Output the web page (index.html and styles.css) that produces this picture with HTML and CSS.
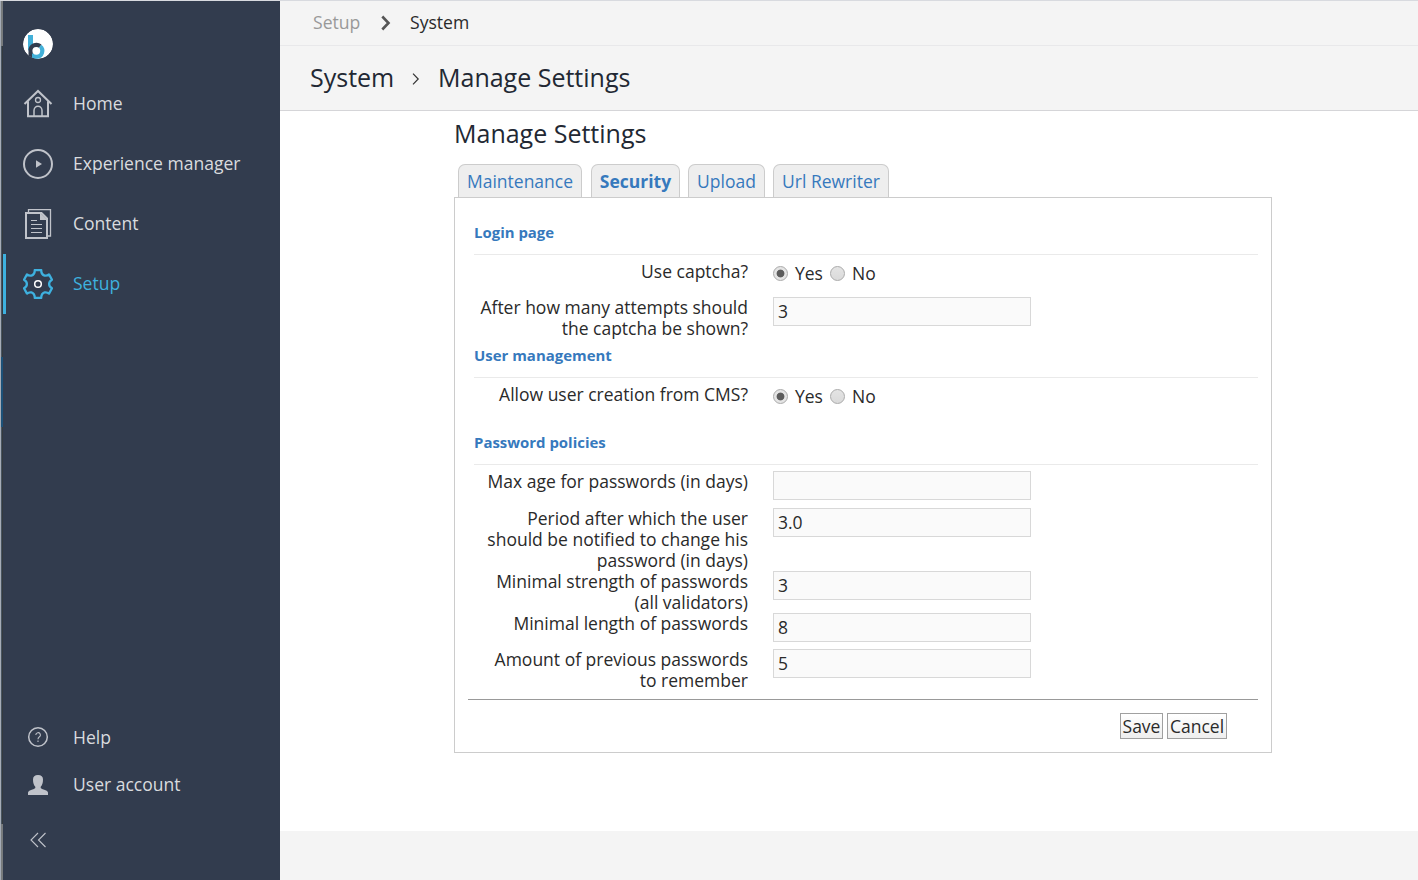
FILE: index.html
```html
<!DOCTYPE html>
<html lang="en">
<head>
<meta charset="utf-8">
<title>Manage Settings</title>
<link rel="stylesheet" href="styles.css">
</head>
<body>
<div class="app">
  <div class="edge"><span class="edge-cap"></span><span class="edge-line"></span><span class="edge-accent"></span><span class="edge-line lower"></span><span class="edge-foot"></span></div>
  <nav class="sidebar">
    <div class="logo">
      <svg width="30" height="30" viewBox="0 0 30 30"><defs><clipPath id="disc"><circle cx="15" cy="15" r="15"/></clipPath></defs><g clip-path="url(#disc)"><circle cx="15" cy="15" r="15" fill="#fff"/><path d="M5 6h5v10l-5 6z" fill="#43b0d8"/><path d="M5.500 30V22a8 8 0 0 1 13-6.500L13.500 22 9 30z" fill="#323c4e"/><path d="M18.300 15.700a8 8 0 0 1-4.800 14.300H9V24.500h4.500V22z" fill="#43b0d8"/><circle cx="13.300" cy="21.800" r="3.900" fill="#fff"/></g></svg>
    </div>
    <a class="item"><svg class="icon" width="30" height="30" viewBox="0 0 30 30" fill="none" stroke="currentColor" stroke-width="2"><path d="M1.500 15 15 2l13.500 13M5 12.500V27.300h20V12.500" /><circle cx="15" cy="11" r="2.500" stroke-width="1.300"/><path d="M11 27v-5.500a4 4.300 0 0 1 8 0V27" stroke-width="1.500"/></svg><span class="text">Home</span></a>
    <a class="item"><svg class="icon" width="30" height="30" viewBox="0 0 30 30"><circle cx="15" cy="15" r="14" fill="none" stroke="currentColor" stroke-width="2"/><path d="M13 11.200 19 15l-6 3.800z" fill="currentColor"/></svg><span class="text">Experience manager</span></a>
    <a class="item"><svg class="icon" width="30" height="30" viewBox="0 0 30 30" fill="none" stroke="currentColor"><path d="M5.500 3V.700H27.500V27H24.500" stroke-width="1.300"/><path d="M3 3.900H18.500L24 9.500V29H3z" stroke-width="2"/><path d="M17 3.500v7.500h7.500z" fill="currentColor" stroke="none"/><path d="M8 11.500h6M8 15.500h11M8 19.500h11M8 23.500h11" stroke-width="1.200"/></svg><span class="text">Content</span></a>
    <a class="item active"><svg class="icon" width="30" height="30" viewBox="0 0 30 30" fill="none"><path d="M11.800 1.100h6.400q.1 4.500 3.400 5.500 2.500.5 4.400-1.200l3 5.300q-2.900 1.500-2.900 4.300t2.900 4.300l-3 5.300q-1.900-1.700-4.400-1.200-3.300 1-3.400 5.500h-6.400q-.1-4.500-3.400-5.500-2.500-.5-4.400 1.200l-3-5.300q2.900-1.500 2.900-4.300t-2.900-4.300l3-5.300q1.900 1.700 4.400 1.200 3.300-1 3.400-5.500z" stroke="#3eb1df" stroke-width="2.300" stroke-linejoin="round"/><circle cx="15" cy="15" r="3.300" stroke="#fff" stroke-width="1.500"/></svg><span class="text">Setup</span></a>
    <div class="spacer"></div>
    <a class="item minor"><svg class="icon help" width="30" height="30" viewBox="0 0 30 30" fill="none" stroke="currentColor"><circle cx="15" cy="15" r="9.300" stroke-width="1.500"/><path d="M12.800 13a2.300 2.300 0 1 1 3.400 2q-1.200.8-1.200 2.200M15 18.500v1.500" stroke-width="1.100"/></svg><span class="text">Help</span></a>
    <a class="item minor"><svg class="icon" width="30" height="30" viewBox="0 0 30 30"><path d="M5 25v-2.500q.3-1.900 3-2.600 3.700-.8 4.300-1.900v-1.300Q10 14.500 10 9.500 10 5 15 5t5 4.500q0 5-2.300 7.200V18q.6 1.100 4.300 1.900 2.700.7 3 2.600V25z" fill="currentColor"/></svg><span class="text">User account</span></a>
    <a class="collapse"><svg class="icon" width="30" height="30" viewBox="0 0 30 30" fill="none" stroke="currentColor" stroke-width="1.100"><path d="M15 8 8 15l7 7M22.500 8l-7 7 7 7"/></svg></a>
  </nav>
  <main class="main">
    <div class="crumbs"><span class="crumb-parent">Setup</span><svg class="crumb-arrow" width="10" height="16" viewBox="0 0 10 16"><path d="M1.300 1.500 7.500 8l-6.200 6.500" fill="none" stroke="#555" stroke-width="2.600"/></svg><span class="text">System</span></div>
    <div class="heading"><span class="heading-first">System</span><svg class="heading-arrow" width="8" height="12" viewBox="0 0 8 12"><path d="M1 .7 6.200 6 1 11.300" fill="none" stroke="#333" stroke-width="1.200"/></svg><span>Manage Settings</span></div>
    <div class="content">
      <h1 class="title">Manage Settings</h1>
      <div class="tabs"><a class="tab t1">Maintenance</a><a class="tab t2 current">Security</a><a class="tab t3">Upload</a><a class="tab t4">Url Rewriter</a></div>
      <form class="panel">
        <h2 class="section">Login page</h2>
        <div class="row"><label class="label">Use captcha?</label><div class="choices"><i class="radio on"></i><span class="yes">Yes</span><i class="radio"></i><span>No</span></div></div>
        <div class="row tall"><label class="label">After how many attempts should<br>the captcha be shown?</label><div class="field">3</div></div>
        <h2 class="section">User management</h2>
        <div class="row tall"><label class="label">Allow user creation from CMS?</label><div class="choices"><i class="radio on"></i><span class="yes">Yes</span><i class="radio"></i><span>No</span></div></div>
        <h2 class="section">Password policies</h2>
        <div class="row age"><label class="label">Max age for passwords (in days)</label><div class="field"></div></div>
        <div class="row triple"><label class="label">Period after which the user<br>should be notified to change his<br>password (in days)</label><div class="field">3.0</div></div>
        <div class="row tall"><label class="label">Minimal strength of passwords<br>(all validators)</label><div class="field">3</div></div>
        <div class="row"><label class="label">Minimal length of passwords</label><div class="field">8</div></div>
        <div class="row tall"><label class="label">Amount of previous passwords<br>to remember</label><div class="field">5</div></div>
        <div class="actions"><span class="button save">Save</span><span class="button cancel">Cancel</span></div>
      </form>
    </div>
    <div class="footer"></div>
  </main>
</div>
</body>
</html>
```
FILE: styles.css
```css
* { box-sizing: border-box; }
body { margin: 0; font-family: "Open Sans", sans-serif; font-size: 17.500px; color: #2a2a2a; }
.app { display: flex; height: 880px; border-top: 1px solid #d8dadf; overflow: hidden; background: #323c4e; }
.edge { width: 3px; flex: none; display: flex; flex-direction: column; border-left: 1px solid #a5acb6; }
.edge-cap { height: 45px; background: #777b7d; }
.edge-line { flex: 311 0 0; border-right: 1px solid #343a3e; background: #485461; }
.lower { flex-grow: 397; }
.edge-accent { height: 70px; background: #1c5178; }
.edge-foot { height: 56px; background: #777b7d; }
.sidebar { width: 277px; flex: none; display: flex; flex-direction: column; color: #d9dbde; }
.logo { height: 73px; padding: 28px 0 0 20px; }
.item { height: 60px; display: flex; align-items: center; padding-left: 20px; white-space: nowrap; font-size: 17.550px; }
.text { padding-bottom: 2px; }
.icon { flex: none; margin-right: 20px; color: #c0c3ca; display: block; }
.help { margin-bottom: 2px; }
.active { border-left: 3px solid #3eb1df; padding-left: 17px; color: #3eb1df; }
.spacer { flex: 1; }
.minor { height: 47px; }
.collapse { height: 72px; padding: 17px 0 0 20px; }
.main { flex: 1; background: #f4f4f4; display: flex; flex-direction: column; }
.crumbs { height: 45px; border-bottom: 1px solid #e8e8ea; display: flex; align-items: center; padding-left: 33px; font-size: 17.600px; }
.crumb-parent { width: 68px; padding-bottom: 2px; color: #999; }
.crumb-arrow { margin-right: 19px; }
.heading { height: 65px; border-bottom: 1px solid #d5d5d8; display: flex; align-items: center; padding: 0 0 2px 30px; font-size: 25px; color: #222833; }
.heading-first { width: 102px; }
.heading-arrow { margin-right: 18px; margin-top: 4px; }
.content { height: 720px; background: #fff; padding: 6px 0 0 174px; }
.title { margin: 0; height: 47px; line-height: 32px; font-size: 25px; font-weight: 400; color: #222833; }
.tabs { display: flex; gap: 8px; padding-left: 4px; height: 33px; }
.tab { height: 33px; line-height: 32px; border: 1px solid #ccc; border-bottom: 0; border-radius: 7px 7px 0 0; background: #eee; color: #3679bd; text-align: center; white-space: nowrap; }
.t1 { width: 124px; margin-right: 1px; }
.t2 { width: 89px; }
.t3 { width: 77px; }
.t4 { width: 116px; }
.current { font-weight: 700; }
.panel { width: 818px; height: 556px; border: 1px solid #ccc; padding: 18px 13px 0; }
.section { margin: 0 0 6px 6px; height: 39px; line-height: 32px; font-size: 14.950px; color: #3679bd; border-bottom: 1px solid #eaeaea; }
.row { display: flex; height: 36px; align-items: flex-start; padding-left: 6px; }
.tall { height: 42px; }
.age { height: 37px; }
.triple { height: 63px; }
.label { width: 274px; margin-right: 25px; text-align: right; line-height: 21px; white-space: nowrap; }
.field { width: 258px; height: 29px; border: 1px solid #d8d8d8; background: #fafafa; line-height: 27px; padding-left: 4px; }
.choices { display: flex; align-items: center; height: 24px; }
.radio { width: 15px; height: 15px; margin-right: 7px; border: 1px solid #aaa; border-radius: 50%; background: linear-gradient(#e4e4e4, #dadada); }
.on { background: radial-gradient(circle, #5c5c5c 3.500px, #e4e4e4 4.300px); }
.yes { width: 35px; }
.actions { margin-top: 8px; border-top: 1px solid #999; padding: 13px 31px 0 0; display: flex; justify-content: flex-end; gap: 4px; }
.button { height: 26px; line-height: 24px; border: 1px solid #a0a0a0; background: linear-gradient(#fff, #eee); text-align: center; }
.save { width: 43px; }
.cancel { width: 60px; }
```
